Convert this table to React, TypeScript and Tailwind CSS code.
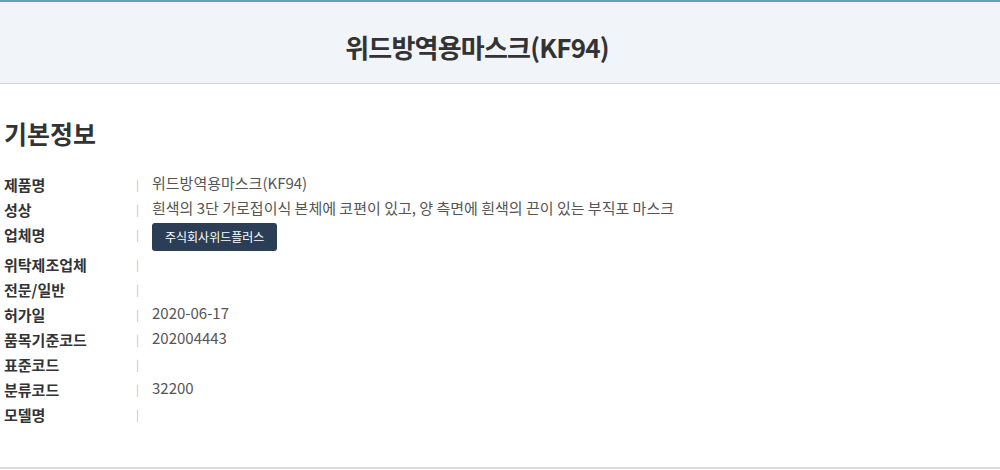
const rows: { label: string; value?: string; button?: boolean }[] = [
  { label: "제품명", value: "위드방역용마스크(KF94)" },
  { label: "성상", value: "흰색의 3단 가로접이식 본체에 코편이 있고, 양 측면에 흰색의 끈이 있는 부직포 마스크" },
  { label: "업체명", value: "주식회사위드플러스", button: true },
  { label: "위탁제조업체" },
  { label: "전문/일반" },
  { label: "허가일", value: "2020-06-17" },
  { label: "품목기준코드", value: "202004443" },
  { label: "표준코드" },
  { label: "분류코드", value: "32200" },
  { label: "모델명" },
];

export default function App() {
  return (
    <div className="flex h-[470px] w-[1000px] flex-col overflow-hidden bg-white font-['Noto_Sans_CJK_KR',sans-serif]">
      <header className="flex h-[84px] shrink-0 items-center justify-center border-t-2 border-b border-t-[#5aa9b9] border-b-[#d6d6d6] bg-[#f1f5f9] pt-[8px] pr-[46px]">
        <h1 className="text-[26px] font-bold tracking-[-0.8px] text-[#333]">위드방역용마스크(KF94)</h1>
      </header>
      <section className="h-[383px] shrink-0 px-[4px]">
        <h2 className="mt-[31px] text-[25px] font-bold leading-[36px] text-[#333]">기본정보</h2>
        <dl className="mt-[24px] flex flex-col">
          {rows.map((r) => (
            <div key={r.label} className={`flex ${r.button ? "h-[30px]" : "h-[25px]"}`}>
              <dt className="w-[132px] text-[15px] font-bold leading-[20px] text-[#333]">{r.label}</dt>
              <dd className="flex">
                <span className="mt-[-1px] w-[16px] text-[11px] leading-[20px] text-[#bbb]">|</span>
                {r.button ? (
                  <span className="mt-[-2px] flex h-[28px] items-center rounded-[3px] bg-[#2c3e55] px-[13px] text-[12px] text-white">
                    {r.value}
                  </span>
                ) : (
                  <span className="mt-[-2px] text-[15px] leading-[20px] text-[#555]">{r.value}</span>
                )}
              </dd>
            </div>
          ))}
        </dl>
      </section>
      <div className="h-[2px] shrink-0 bg-[#dcdcdc]" />
    </div>
  );
}
